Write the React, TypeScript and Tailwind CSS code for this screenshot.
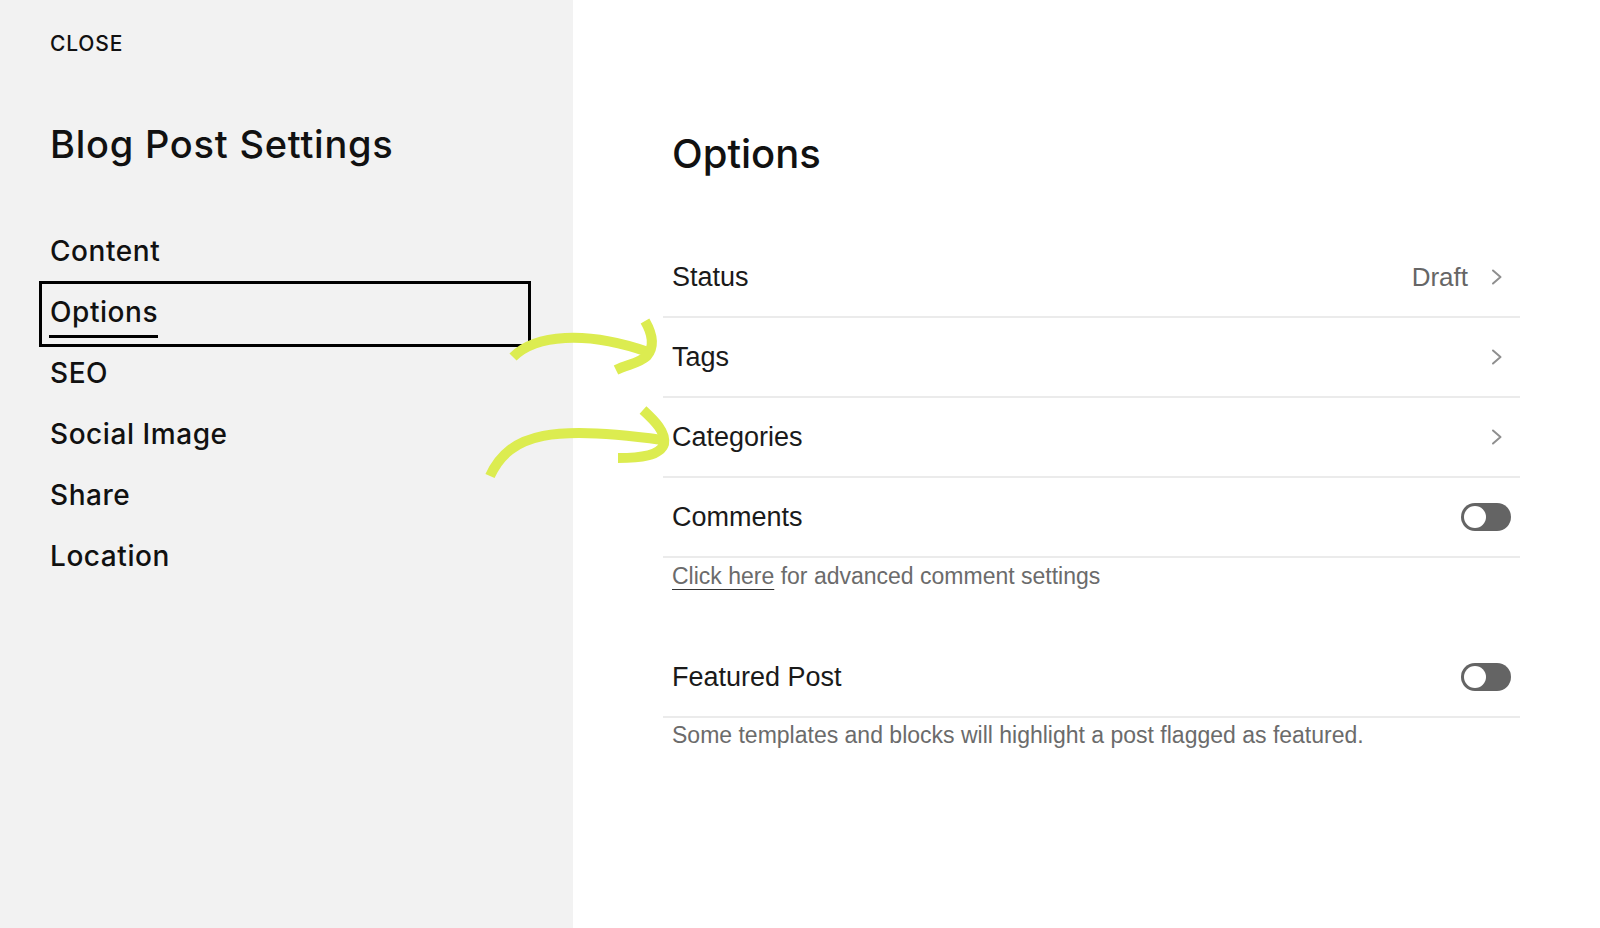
import React from 'react';

const navItems = ['Content', 'Options', 'SEO', 'Social Image', 'Share', 'Location'];

function Chevron() {
  return (
    <svg width="12" height="16" viewBox="0 0 12 16" fill="none" className="shrink-0">
      <path d="M2 1.5 L9.5 8 L2 14.5" stroke="#8f8f8f" strokeWidth="2" strokeLinecap="round" strokeLinejoin="round" />
    </svg>
  );
}

function Toggle() {
  return (
    <div className="w-[50px] h-[28px] rounded-full bg-[#646464] flex items-center px-[3px]">
      <div className="w-[22px] h-[22px] rounded-full bg-white" />
    </div>
  );
}

function Row({ label, right }: { label: string; right: React.ReactNode }) {
  return (
    <div className="h-[80px] flex items-center justify-between pl-[9px] border-b-2 border-[#ebebeb]">
      <span className="text-[27px] text-[#1a1a1a]">{label}</span>
      {right}
    </div>
  );
}

export default function App() {
  return (
    <div className="relative w-[1600px] h-[928px] flex overflow-hidden bg-white" style={{ fontFamily: '"Liberation Sans", Arial, sans-serif' }}>
      {/* Sidebar */}
      <aside className="w-[573px] h-full bg-[#f2f2f2] pl-[50px] pt-[33px] shrink-0 font-['Inter',sans-serif] text-[#111]">
        <div className="text-[21px] leading-none font-medium tracking-[0.04em]">CLOSE</div>
        <h1 className="mt-[71px] text-[38px] leading-none font-medium tracking-[0.02em]">Blog Post Settings</h1>
        <nav className="mt-[57px]">
          {navItems.map((item) => (
            <div key={item} className="relative h-[61px] flex items-center text-[28px] font-medium tracking-[0.02em]">
              {item === 'Options' ? (
                <>
                  <span className="absolute left-[-11px] top-0 w-[492px] h-[66px] border-[3px] border-black" />
                  <span className="relative">
                    Options
                    <span className="absolute left-[-1px] right-0 bottom-[-5px] h-[3px] bg-black" />
                  </span>
                </>
              ) : (
                <span>{item}</span>
              )}
            </div>
          ))}
        </nav>
      </aside>

      {/* Main */}
      <main className="flex-1 pl-[90px]">
        <div className="w-[857px]">
          <h2 className="pl-[9px] pt-[134px] text-[40px] leading-none font-medium font-['Inter',sans-serif] text-[#111]">Options</h2>
          <div className="mt-[64px]">
            <Row
              label="Status"
              right={
                <div className="flex items-center gap-[23px] pr-[17px]">
                  <span className="text-[26px] text-[#666]">Draft</span>
                  <Chevron />
                </div>
              }
            />
            <Row label="Tags" right={<div className="pr-[17px]"><Chevron /></div>} />
            <Row label="Categories" right={<div className="pr-[17px]"><Chevron /></div>} />
            <Row label="Comments" right={<div className="pr-[9px]"><Toggle /></div>} />
            <div className="h-[80px] pl-[9px] pt-[1px] text-[23px] text-[#6b6b6b]">
              <span className="underline decoration-[#333] underline-offset-[5px] decoration-1">Click here</span> for advanced comment settings
            </div>
            <Row label="Featured Post" right={<div className="pr-[9px]"><Toggle /></div>} />
            <div className="pl-[9px] text-[23px] text-[#6b6b6b]">
              Some templates and blocks will highlight a post flagged as featured.
            </div>
          </div>
        </div>
      </main>

      {/* Hand-drawn annotation arrows */}
      <svg className="absolute inset-0 pointer-events-none" width="1600" height="928" viewBox="0 0 1600 928" fill="none">
        <g stroke="#dcec50" strokeWidth="10" strokeLinecap="butt" strokeLinejoin="round">
          <path d="M513 357 C 535 335, 585 330, 648 352" />
          <path d="M645 321 C 652 333, 655 346, 647 356 C 638 364, 628 364, 616 370" />
          <path d="M490 476 C 510 432, 555 425, 662 440" />
          <path d="M643 410 C 655 421, 666 432, 664 444 C 660 456, 640 458, 618 458" />
        </g>
      </svg>
    </div>
  );
}
